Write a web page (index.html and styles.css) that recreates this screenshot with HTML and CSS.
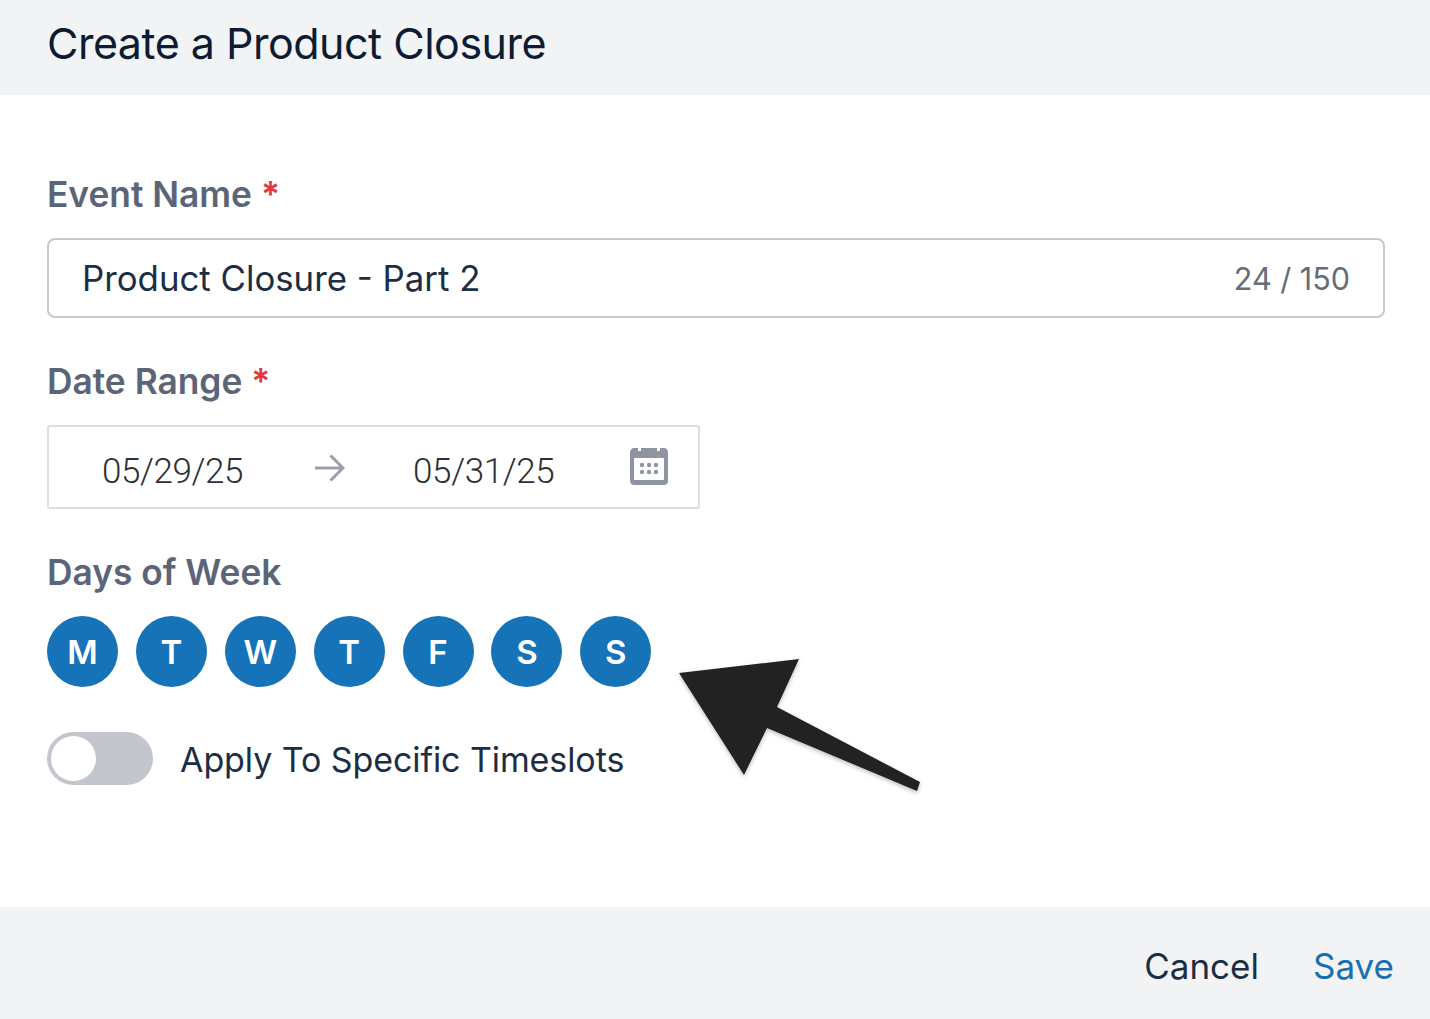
FILE: index.html
```html
<!DOCTYPE html>
<html lang="en">
<head>
  <meta charset="UTF-8" />
  <meta name="viewport" content="width=device-width, initial-scale=1.0" />
  <title>Create a Product Closure</title>
  <link rel="stylesheet" href="styles.css">
</head>
<body>
  <div class="dialog">
    <!-- Header -->
    <div class="header">
      <div class="title">Create a Product Closure</div>
    </div>

    <!-- Form -->
    <div class="form-container">
      <div class="field-label name-label">Event Name <span class="required">*</span></div>
      <div class="text-input">
        <span class="input-value">Product Closure - Part 2</span>
        <span class="char-count">24 / 150</span>
      </div>

      <div class="field-label range-label">Date Range <span class="required">*</span></div>
      <div class="date-range">
        <span class="date-value">05/29/25</span>
        <svg class="range-arrow" viewBox="0 0 30 28" width="30" height="28" aria-hidden="true">
          <path d="M0 14H28M15.500 1.500L28 14 15.500 26.500" fill="none" stroke="#9a9fa8" stroke-width="3"/>
        </svg>
        <span class="date-value">05/31/25</span>
        <svg class="calendar-icon" viewBox="0 0 38 39" width="38" height="39" aria-hidden="true">
          <path fill="#8f95a0" d="M4 2H8V5H11V2H27V5H30V2H34C36 2 38 4 38 6V35C38 37.500 36 39 34 39H4C2 39 0 37.500 0 35V6C0 4 2 2 4 2Z"/>
          <rect x="4" y="12" width="30" height="22" rx="1" fill="#fff"/>
          <g fill="#8f95a0">
            <circle cx="12" cy="19" r="2.200"/><circle cx="19" cy="19" r="2.200"/><circle cx="26" cy="19" r="2.200"/>
            <circle cx="12" cy="26" r="2.200"/><circle cx="19" cy="26" r="2.200"/><circle cx="26" cy="26" r="2.200"/>
          </g>
        </svg>
      </div>

      <div class="field-label days-label">Days of Week</div>
      <div class="days">
        <div class="day">M</div>
        <div class="day">T</div>
        <div class="day">W</div>
        <div class="day">T</div>
        <div class="day">F</div>
        <div class="day">S</div>
        <div class="day">S</div>
      </div>

      <div class="toggle-row">
        <div class="toggle"><div class="knob"></div></div>
        <span class="toggle-label">Apply To Specific Timeslots</span>
      </div>
    </div>

    <!-- Footer -->
    <div class="footer">
      <button class="cancel-btn">Cancel</button>
      <button class="save-btn">Save</button>
    </div>
  </div>

  <!-- Annotation drawn over the screenshot -->
  <svg class="annotation" viewBox="0 0 1430 1019" width="1430" height="1019" aria-hidden="true">
    <polygon fill="#222222" points="679,673 799,659 777,707 920,782 917,791 767,728 744,775"/>
  </svg>
</body>
</html>
```

FILE: styles.css
```css
/* Global Reset & Base Styles */
* { margin: 0; padding: 0; box-sizing: border-box; }
body {
  font-family: 'Inter', 'Liberation Sans', sans-serif;
  background: #fff;
  color: #1a2a40;
  overflow: hidden;
}
.dialog {
  display: flex;
  flex-direction: column;
  height: 1019px;
}
/* Header */
.header {
  display: flex;
  align-items: center;
  height: 95px;
  padding: 0 47px 10px;
  background: #f2f3f5;
}
.header .title {
  font-size: 43px;
  letter-spacing: -0.5px;
  color: #0d1c33;
}
/* Form Styles */
.form-container {
  flex: 1;
  padding: 0 45px 0 47px;
}
.field-label {
  font-size: 35.300px;
  line-height: 40px;
  font-weight: 600;
  color: #5b6577;
  padding-top: 1px;
}
.field-label .required {
  color: #e03a3a;
}
.name-label { margin-top: 79px; }
.range-label { margin-top: 43px; }
.days-label { margin-top: 43px; }
.text-input {
  display: flex;
  align-items: center;
  justify-content: space-between;
  height: 80px;
  margin-top: 23px;
  padding: 0 33px;
  border: 2px solid #c6c9cd;
  border-radius: 8px;
}
.input-value {
  font-size: 34.800px;
  color: #1c2d44;
}
.char-count {
  font-size: 30.500px;
  color: #646d7a;
}
.date-range {
  display: flex;
  align-items: center;
  width: 653px;
  height: 84px;
  margin-top: 23px;
  border: 2px solid #dcdee1;
  border-radius: 3px;
}
.date-value {
  font-family: 'Roboto', 'Liberation Sans', sans-serif;
  font-size: 35px;
  font-weight: 300;
  letter-spacing: -0.4px;
  color: #2c2f35;
  margin-left: 53px;
  padding-top: 8px;
}
.range-arrow {
  margin-left: 72px;
  margin-right: 15px;
  margin-top: 2px;
}
.calendar-icon {
  margin-left: 76px;
  margin-bottom: 4px;
}
/* Days of Week */
.days {
  display: flex;
  gap: 17.900px;
  margin-top: 23px;
}
.day {
  display: flex;
  align-items: center;
  justify-content: center;
  width: 71px;
  height: 71px;
  border-radius: 50%;
  background: #1673b8;
  color: #fff;
  font-size: 33px;
  font-weight: 600;
}
/* Toggle */
.toggle-row {
  display: flex;
  align-items: center;
  gap: 27px;
  margin-top: 45px;
}
.toggle {
  width: 106px;
  height: 53px;
  padding: 4px;
  border-radius: 27px;
  background: #c3c6cc;
}
.knob {
  width: 45px;
  height: 45px;
  border-radius: 50%;
  background: #fff;
}
.toggle-label {
  font-size: 34px;
  letter-spacing: -0.08px;
  color: #1c2d44;
  padding-top: 2px;
}
/* Footer */
.footer {
  display: flex;
  align-items: center;
  justify-content: flex-end;
  gap: 54px;
  height: 112px;
  padding-top: 6px;
  padding-right: 36px;
  background: #f2f3f5;
}
.footer button {
  border: none;
  background: none;
  font-family: inherit;
  font-size: 35px;
}
.cancel-btn { color: #1c2d44; }
.save-btn { color: #1a6fae; }
/* Annotation */
.annotation {
  position: absolute;
  top: 0;
  left: 0;
  pointer-events: none;
  filter: drop-shadow(0 2px 2px rgba(0,0,0,0.25));
}
```
